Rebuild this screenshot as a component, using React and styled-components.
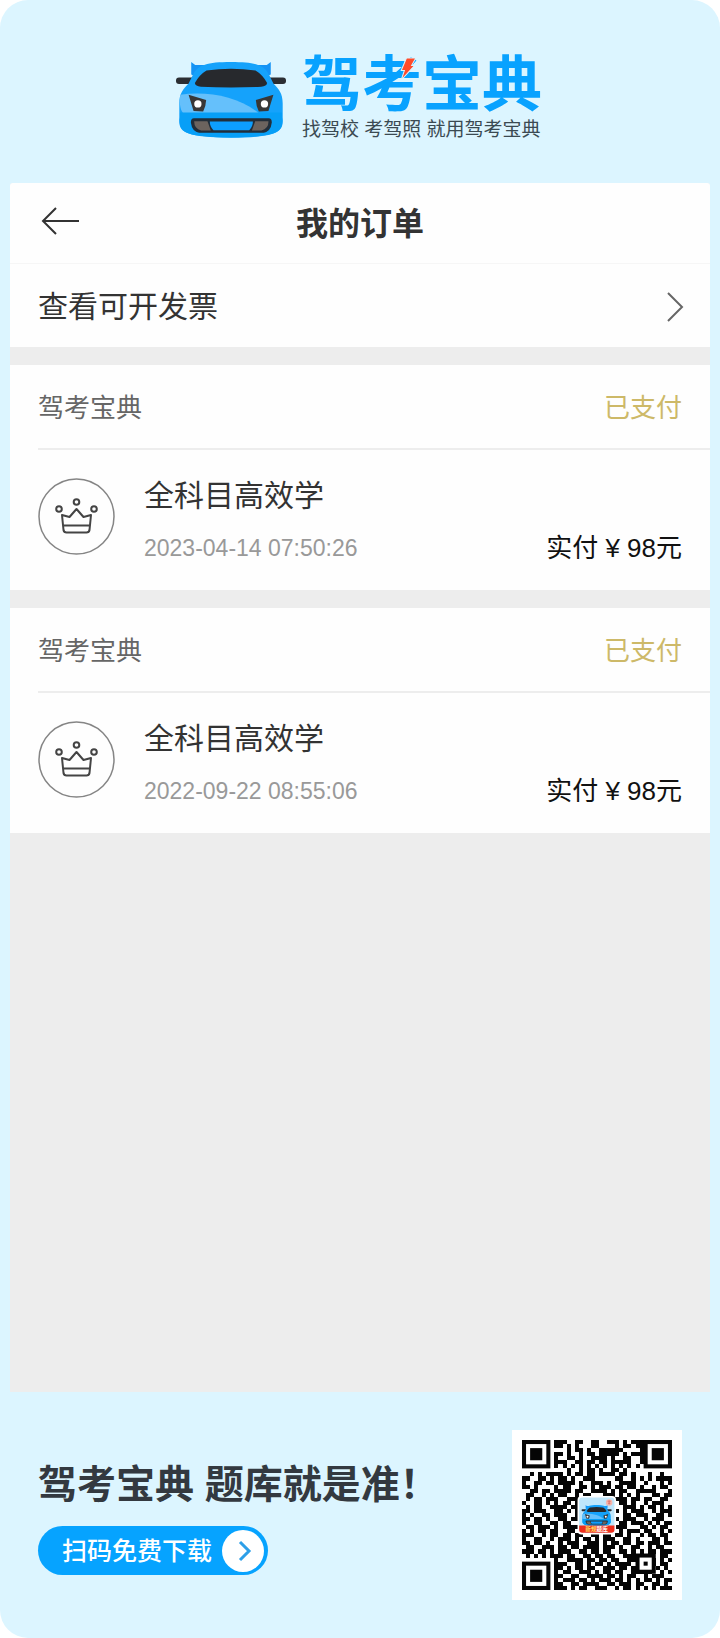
import React from "react";
import styled, { createGlobalStyle } from "styled-components";

const GlobalStyle = createGlobalStyle`
  * { box-sizing: border-box; }
  body {
    margin: 0;
    background: #fff;
    color: #333;
    font-family: "Liberation Sans", "Noto Sans CJK SC", sans-serif;
  }
  h1, h2, p { margin: 0; font-weight: 400; }
`;

const Poster = styled.div`
  display: flex;
  flex-direction: column;
  min-height: 100vh;
  border-radius: 28px;
  background: #dcf5ff;
`;

const BrandHeader = styled.header`
  display: flex;
  justify-content: center;
  align-items: center;
  gap: 16px;
  padding: 56px 14px 41px 12px;
`;

const CarArt = styled.svg`
  display: block;
  width: 110px;
  height: 79px;
`;

const BrandText = styled.div`
  display: flex;
  flex-direction: column;
  gap: 2px;
`;

const Wordmark = styled.p`
  position: relative;
  color: #08a2ff;
  font-size: 60px;
  font-weight: 700;
  line-height: 60px;
`;

const Bolt = styled.svg`
  position: absolute;
  top: 1px;
  left: 97px;
  width: 18px;
  height: 23px;
`;

const Tagline = styled.p`
  color: #3b4a52;
  font-size: 19px;
  line-height: 24px;
`;

const Screen = styled.main`
  flex: 1;
  margin: 0 10px;
  border-radius: 3px 3px 0 0;
  background: #ededed;
  overflow: hidden;
`;

const NavBar = styled.div`
  display: grid;
  grid-template-columns: 60px 1fr 60px;
  align-items: center;
  height: 81px;
  padding: 2px 20px 0;
  border-bottom: 1px solid #f6f6f6;
  background: #fefefe;
`;

const BackButton = styled.button`
  display: flex;
  justify-content: center;
  padding: 0 0 6px;
  border: 0;
  background: none;
  cursor: pointer;
`;

const NavTitle = styled.h1`
  font-size: 32px;
  font-weight: 700;
  line-height: 40px;
  text-align: center;
`;

const InvoiceLink = styled.a`
  display: flex;
  align-items: center;
  justify-content: space-between;
  height: 83px;
  padding: 2px 26px 0 28px;
  background: #fefefe;
  color: #333;
  font-size: 30px;
  line-height: 40px;
  text-decoration: none;
`;

const OrderCard = styled.article`
  margin-top: 18px;
  padding-left: 28px;
  background: #fefefe;
`;

const OrderHead = styled.div`
  display: flex;
  align-items: center;
  justify-content: space-between;
  height: 85px;
  padding: 2px 28px 0 0;
  border-bottom: 2px solid #ededed;
  font-size: 26px;
  line-height: 36px;
`;

const Merchant = styled.span`
  color: #666;
`;

const Status = styled.span`
  color: #cdb968;
`;

const OrderBody = styled.div`
  display: flex;
  gap: 29px;
  height: 140px;
  padding: 28px 28px 0 0;
`;

const CrownBadge = styled.svg`
  display: block;
  flex: none;
  width: 77px;
  height: 77px;
`;

const OrderInfo = styled.div`
  display: flex;
  flex: 1;
  flex-direction: column;
  gap: 18px;
`;

const ProductName = styled.h2`
  font-size: 30px;
  line-height: 36px;
`;

const OrderMeta = styled.div`
  display: flex;
  align-items: center;
  justify-content: space-between;
  line-height: 32px;
`;

const OrderTime = styled.time`
  color: #999;
  font-size: 23px;
`;

const Paid = styled.span`
  color: #111;
  font-size: 26px;
`;

const PosterFooter = styled.footer`
  display: flex;
  align-items: center;
  justify-content: space-between;
  padding: 38px 38px;
`;

const Promo = styled.div`
  display: flex;
  flex-direction: column;
  align-items: flex-start;
  gap: 17px;
  padding-top: 6px;
`;

const Slogan = styled.p`
  color: #333940;
  font-size: 39px;
  font-weight: 700;
  line-height: 48px;
`;

const DownloadButton = styled.button`
  display: flex;
  align-items: center;
  gap: 10px;
  height: 49px;
  padding: 0 4px 0 24px;
  border: 0;
  border-radius: 25px;
  background: #06a3ff;
  color: #fff;
  font-family: inherit;
  font-size: 25px;
  font-weight: 500;
  line-height: 36px;
  cursor: pointer;
`;

const QrFrame = styled.div`
  padding: 10px;
  background: #fff;
`;

const QrArt = styled.svg`
  display: block;
  width: 150px;
  height: 150px;
`;

function CarShapes() {
  return (
    <>
      <path d="M64 29 L76 38 H292 L304 29 V67 L282 76 L84 76 L64 67Z" fill="#1493f5" />
      <rect x="18" y="76" width="58" height="20" rx="9" fill="#2b2e33" />
      <rect x="292" y="76" width="58" height="20" rx="9" fill="#2b2e33" />
      <path d="M70 66 C84 38 112 29 184 29 C256 29 284 38 298 66 L312 94 C328 110 340 124 340 154 V196 C344 242 326 256 184 258 C42 256 24 242 28 196 V154 C28 124 40 110 56 94Z" fill="#15a2fb" />
      <path d="M31 128 C110 116 206 132 268 184 H40 C30 174 27 148 31 128Z" fill="#65c0fb" />
      <path d="M30 182 H338 V200 C342 240 326 255 184 257 C42 255 26 240 30 200Z" fill="#079ff7" />
      <path d="M110 55 Q184 45 258 55 Q280 68 293 93 Q292 103 275 104 Q184 108 93 104 Q76 103 75 93 Q88 68 110 55Z" fill="#27292d" />
      <path d="M56 128 L109 144 Q108 165 100 179 L71 177Z M312 128 L259 144 Q260 165 268 179 L297 177Z" fill="#383737" />
      <circle cx="84" cy="156" r="11" fill="#fff" />
      <circle cx="285" cy="156" r="11" fill="#fff" />
      <path d="M72 199 H298 Q308 200 307 213 Q304 239 283 243 H88 Q66 239 63 213 Q62 200 72 199Z" fill="#222e3a" />
      <path d="M73 208 H113 L123 236 H94 Q72 231 73 208Z M297 208 H257 L247 236 H276 Q298 231 297 208Z" fill="#6c635e" />
      <path d="M120 209 H250 Q250 225 239 235 H131 Q120 225 120 209Z" fill="#0d9eff" />
    </>
  );
}

const QR_ROWS = [
  "........###..##..##..###.#.###.......",
  "........##.#.#...##....#.##.##.......",
  "...........#.##.#..######....#.......",
  "........##.#..#.##.#####.#.###.......",
  "........#..##.#..####.#..##..#.......",
  "........###..##.##.##.#####..#.......",
  "........#.#.#.#.#.#.#.#.#.#.#........",
  "...........#..#.##.#..##.#...........",
  "..#.#.####.#.##.##.####.##.#...#..#..",
  "##..##.#.##.#..###.....##..#.#.#.####",
  "#..##.##.####.#..###.#..####..#...#.#",
  "##.#....#.##..##.#.###.##.##.#..#.##.",
  "..##.##.####.##..####.#.##..#####...#",
  ".##..#.#.##..#.##...###.#.#.#...##.##",
  ".#.##.###..###.##.#.#..###.##.##..##.",
  "#..##.#.#.##.##...####..##.#..#.###..",
  ".#.##..####.###......##..###.#.##.#.#",
  "##.###..##.#.##.......##.#.###..#.###",
  "#.#..##.###..###......#..##.###..##.#",
  "##.##.#..##.##.......#.#.###..#.###..",
  "#..##..##.##..#......##.##.###.#.#.##",
  ".##.###.#.####.......#.###...##.#.##.",
  "#.#.##.##..##.#......##.#.###.##..#.#",
  "###..#.##.##.##..##.##.##.#..#.##.##.",
  "#..##..#.###.#.##.#.###..##.#...##.#.",
  "##.##.#..#.###..###.#.##.##.##.###.##",
  ".##..###.##.##.####.###.#..##..#.##..",
  "###.##.#.###..##.##.##..##.#.#.##.###",
  ".#.#.#.###.##..##.##.##..#######..##.",
  "........#..####.##.##.##..##...##.#.#",
  "........###..##.#.##.#.####..#.##.##.",
  "........##.#.##.##..###.##.#...#.#.#.",
  "........#.##..###.#.##.##..#####..#.#",
  "........##..##..####.##.#.##..#.###..",
  "........#.###.##.#.###.##.#.#.##.#.##",
  "........##..##.####..##.###.##..##.#.",
  "........###.#.##..###..#.##.#.#.#.###",
];

const FINDERS = [[0, 0], [30, 0], [0, 30]];

function QrCode() {
  const cells = QR_ROWS.map((row, y) =>
    [...row].map((c, x) => (c === "#" ? `M${x} ${y}h1v1h-1z` : "")).join("")
  ).join("");
  return (
    <QrArt viewBox="0 0 37 37" role="img" aria-label="下载二维码">
      <path d={cells} fill="#050505" shapeRendering="crispEdges" />
      {FINDERS.map(([x, y]) => (
        <g key={`${x}-${y}`}>
          <rect x={x + 0.5} y={y + 0.5} width="6" height="6" fill="#fff" stroke="#050505" />
          <rect x={x + 2} y={y + 2} width="3" height="3" fill="#050505" />
        </g>
      ))}
      <rect x="28.5" y="28.5" width="4" height="4" fill="#fff" stroke="#050505" />
      <rect x="30" y="30" width="1" height="1" fill="#050505" />
      <rect x="13.7" y="13.8" width="9.5" height="9.5" rx="1" fill="#fff" />
      <rect x="14.1" y="14.2" width="8.7" height="8.7" rx=".8" fill="#bfe6fb" />
      <svg x="14.6" y="15.9" width="7.6" height="5.4" viewBox="15 24 338 237">
        <CarShapes />
      </svg>
      <circle cx="21.5" cy="15.4" r=".8" fill="#f4b6ad" />
      <path d="M21.1 15.1h.8M21.2 15.6h.6M21.5 14.9v1" stroke="#dc6b61" strokeWidth=".2" />
      <path d="M14.1 21.1h8.7v1q0 .8-.8.8h-7.1q-.8 0-.8-.8z" fill="#ee2f1d" />
      <text x="18.4" y="22.5" textAnchor="middle" fontSize="1.4" fontWeight="700" fill="#ffd75e">
        新规<tspan fill="#fff">题库</tspan>
      </text>
    </QrArt>
  );
}

function Crown() {
  return (
    <CrownBadge viewBox="0 0 77 77" fill="none" stroke="#444" strokeWidth="2" aria-hidden="true">
      <circle cx="38.5" cy="38.5" r="37.5" stroke="#858585" strokeWidth="1.5" />
      <circle cx="38.5" cy="24" r="2.8" />
      <circle cx="21" cy="31" r="2.8" />
      <circle cx="56" cy="31" r="2.8" />
      <path d="M24 37 L31.5 39 L38.5 31 L45.5 39 L53 37 L51.5 52 Q51 54.5 48.5 54.5 H28.5 Q26 54.5 25.5 52Z M25 47.5 H52" strokeLinejoin="round" />
    </CrownBadge>
  );
}

function Order({ time }) {
  return (
    <OrderCard>
      <OrderHead>
        <Merchant>驾考宝典</Merchant>
        <Status>已支付</Status>
      </OrderHead>
      <OrderBody>
        <Crown />
        <OrderInfo>
          <ProductName>全科目高效学</ProductName>
          <OrderMeta>
            <OrderTime>{time}</OrderTime>
            <Paid>实付 ¥ 98元</Paid>
          </OrderMeta>
        </OrderInfo>
      </OrderBody>
    </OrderCard>
  );
}

export default function App() {
  return (
    <>
      <GlobalStyle />
      <Poster lang="zh-CN">
        <BrandHeader>
          <CarArt viewBox="18 24 332 237" aria-hidden="true">
            <CarShapes />
          </CarArt>
          <BrandText>
            <Wordmark>
              驾考宝典
              <Bolt viewBox="0 0 17 22" aria-hidden="true">
                <path d="M7 1 H16 L12 8 H15 L2 22 L5 13 H2Z" fill="#ff4b2b" stroke="#dcf5ff" strokeWidth="1" />
              </Bolt>
            </Wordmark>
            <Tagline>找驾校 考驾照 就用驾考宝典</Tagline>
          </BrandText>
        </BrandHeader>

        <Screen>
          <NavBar>
            <BackButton type="button" aria-label="返回">
              <svg width="38" height="30" viewBox="0 0 38 30" fill="none" stroke="#333" strokeWidth="2">
                <path d="M15 2 L2 15 L15 28 M2 15 H38" />
              </svg>
            </BackButton>
            <NavTitle>我的订单</NavTitle>
          </NavBar>
          <InvoiceLink href="#invoice">
            查看可开发票
            <svg width="18" height="30" viewBox="0 0 18 30" fill="none" stroke="#666" strokeWidth="2">
              <path d="M2 1 L16 15 L2 29" />
            </svg>
          </InvoiceLink>
          <Order time="2023-04-14 07:50:26" />
          <Order time="2022-09-22 08:55:06" />
        </Screen>

        <PosterFooter>
          <Promo>
            <Slogan>驾考宝典 题库就是准！</Slogan>
            <DownloadButton type="button">
              扫码免费下载
              <svg width="42" height="42" viewBox="0 0 42 42" fill="none" aria-hidden="true">
                <circle cx="21" cy="21" r="21" fill="#fff" />
                <path d="M18 12 L27 21 L18 30" stroke="#2d9fe8" strokeWidth="3" />
              </svg>
            </DownloadButton>
          </Promo>
          <QrFrame>
            <QrCode />
          </QrFrame>
        </PosterFooter>
      </Poster>
    </>
  );
}
